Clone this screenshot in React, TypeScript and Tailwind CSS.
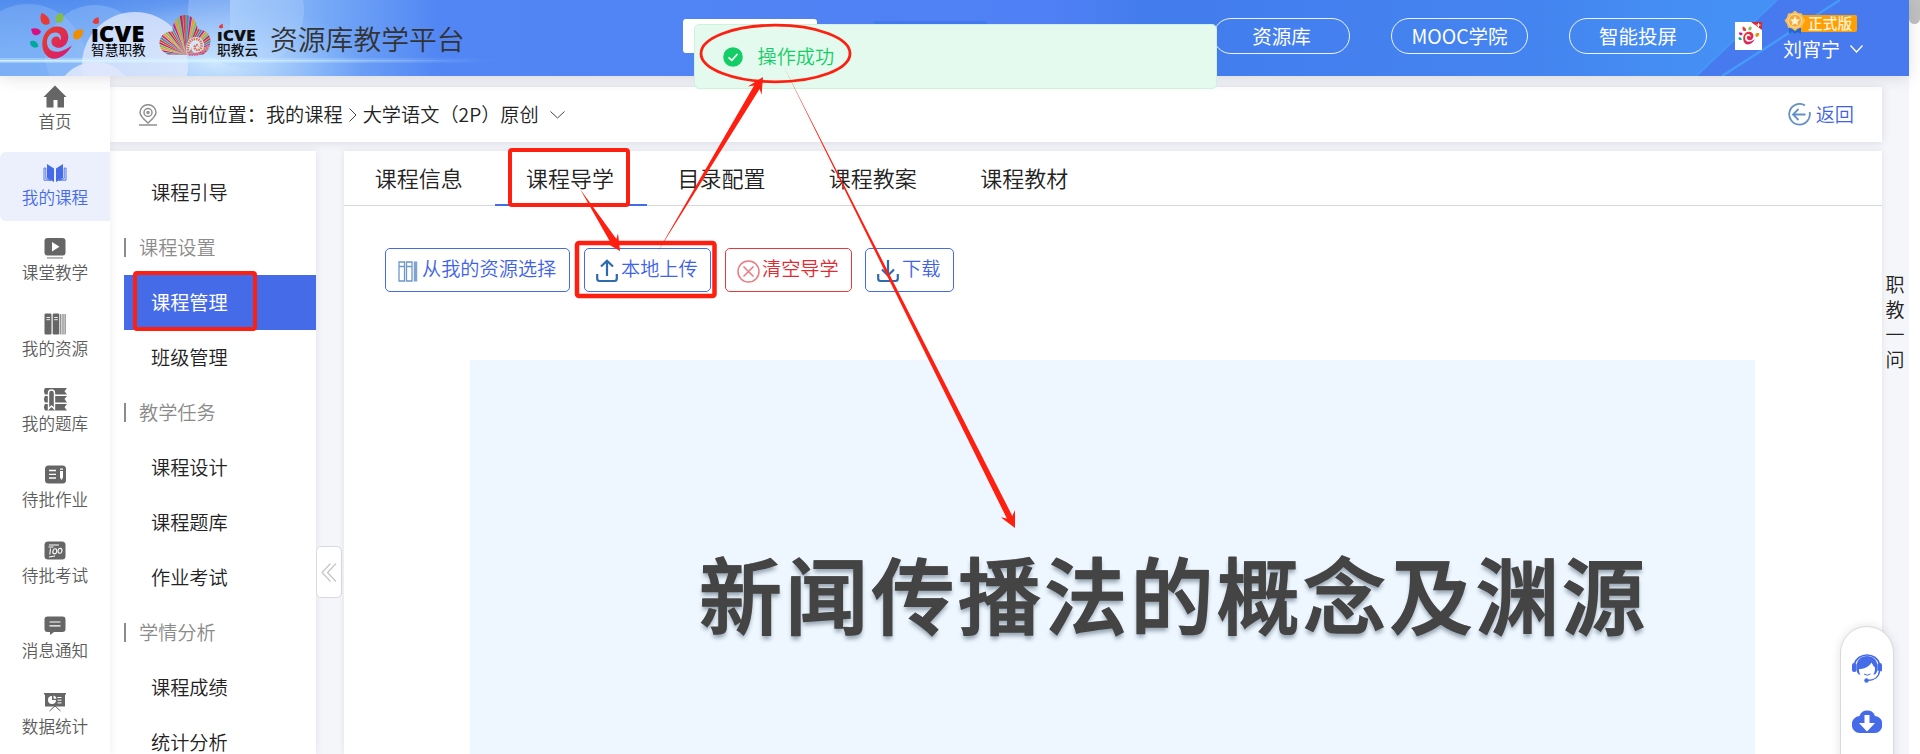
import React from "react";

const railItems = [
  "首页", "我的课程", "课堂教学", "我的资源", "我的题库", "待批作业", "待批考试", "消息通知", "数据统计",
];

type Entry = { label: string; kind?: "group" | "active" };
const menu: Entry[] = [
  { label: "课程引导" },
  { label: "课程设置", kind: "group" },
  { label: "课程管理", kind: "active" },
  { label: "班级管理" },
  { label: "教学任务", kind: "group" },
  { label: "课程设计" },
  { label: "课程题库" },
  { label: "作业考试" },
  { label: "学情分析", kind: "group" },
  { label: "课程成绩" },
  { label: "统计分析" },
];

const tabs = ["课程信息", "课程导学", "目录配置", "课程教案", "课程教材"];

function RailIcon({ index }: { index: number }) {
  const c = index === 1 ? "#466be8" : "#666666";
  return (
    <svg width="24" height="24" viewBox="0 0 24 24" fill={c} className="block">
      {index === 0 && <path d="M12 0.5 L23.5 12 H21 V22.5 H14.5 V15 H10.5 V22.5 H3.5 V12 H0.5 Z" />}
      {index === 1 && (
        <g>
          <path d="M4 3 L11 7.5 V21 L4 17 Z M20 3 L13 7.5 V21 L20 17 Z" />
          <path d="M2.6 7 H1 V19.2 H8 M21.400 7 H23 V19.2 H16 M2.800 7 V17.500 L8 19.500 M21.200 7 V17.500 L16 19.500" fill="none" stroke={c} strokeWidth="0.900" />
        </g>
      )}
      {index === 2 && (
        <g>
          <rect x="1.500" y="2" width="21" height="17.500" rx="3" />
          <path d="M9 6 L16.500 10.800 L9 15.500 Z" fill="#fff" />
          <rect x="4" y="21.200" width="16" height="1.500" opacity="0.600" />
        </g>
      )}
      {index === 3 && (
        <g>
          <rect x="1.500" y="1.500" width="7" height="21" rx="1.200" />
          <rect x="9.700" y="1.500" width="6.600" height="21" rx="1.200" />
          <path d="M17.300 2 h1 v20.500 h-1z M19.500 2 h1 v20.500 h-1z M21.600 2 h1 v20.500 h-1z" />
          <path d="M3.500 5.500 h3.500 M3.500 7.700 h3.500 M11.300 5.500 h3.500 M11.300 7.700 h3.500" stroke="#fff" strokeWidth="0.900" />
        </g>
      )}
      {index === 4 && (
        <g>
          <path d="M2 1 H24 L21.500 4.200 L24 7.500 H2 Q0 4.200 2 1 Z M2 9 H24 L21.500 12 L24 15.500 H2 Q0 12 2 9 Z M2 17 H24 L21.500 20.200 L24 23.500 H2 Q0 20.200 2 17 Z" />
          <path d="M5.500 22 V6 Q5.500 3 8.500 3 Q11.500 3 11.500 6 V22 L8.500 19 Z" stroke="#fff" strokeWidth="1.400" />
        </g>
      )}
      {index === 5 && (
        <g>
          <rect x="2" y="2.500" width="21" height="18" rx="3.500" />
          <path d="M6 7.500 h7 M6 11.300 h7 M6 15 h7" stroke="#fff" strokeWidth="1.300" />
          <path d="M17 5.500 h3 v1.300 h-3z M17 8 h3 v6.500 l-1.500 2.500 l-1.500 -2.500z" fill="#fff" />
        </g>
      )}
      {index === 6 && (
        <g>
          <rect x="1.500" y="2.500" width="21" height="18" rx="3.500" />
          <g fill="none" stroke="#fff" strokeWidth="1.100">
            <path d="M6 6 h10 M5.500 8 h5 M7.500 9.500 L6.800 15.500 M6 18 L12 17" />
            <ellipse cx="11.800" cy="12.300" rx="1.900" ry="2.600" transform="rotate(15 11.800 12.300)" />
            <ellipse cx="17" cy="11.800" rx="1.900" ry="2.500" transform="rotate(15 17 11.800)" />
          </g>
        </g>
      )}
      {index === 7 && (
        <g>
          <path d="M4.500 2.500 h15 q3 0 3 3 v9.500 q0 3 -3 3 h-8.500 l-4 3 v-3 h-2.500 q-3 0 -3 -3 v-9.500 q0 -3 3 -3z" />
          <path d="M6.500 8 h11 M6.500 11.800 h11" stroke="#fff" strokeWidth="1.200" />
        </g>
      )}
      {index === 8 && (
        <g>
          <path d="M1 3 h22 v1.500 h-1 v12 h-20 v-12 h-1z" />
          <path d="M12 16 L6.500 21 M12 16 L17.500 21" stroke={c} strokeWidth="1" />
          <path d="M9 6 v4 h4 a4 4 0 1 1 -4 -4z" fill="#fff" />
          <path d="M10.500 5.500 a4 4 0 0 1 3 3.200 h-3z" fill="#fff" />
          <path d="M14.500 7.500 h4 M14.500 10.200 h4 M14.500 12.900 h4" stroke="#fff" strokeWidth="1" />
        </g>
      )}
    </svg>
  );
}

function SwirlMark({ className }: { className: string }) {
  return (
    <svg viewBox="0 0 56 48" className={className}>
      <defs>
        <linearGradient id="swirl" x1="0" y1="0" x2="1" y2="1">
          <stop offset="0" stopColor="#e8431f" />
          <stop offset="1" stopColor="#d5157f" />
        </linearGradient>
      </defs>
      <path d="M12.500 1 C18 3 21.500 7 20.500 11.500 C17.500 14 13.500 13 12 9 C11 6 11.500 3.500 12.500 1Z" fill="#e73935" />
      <path d="M33 1 C35.500 4 35 8.500 32 10.500 C28 12 25.500 9 26.500 5.500 C27.500 2.500 30 1 33 1Z" fill="#86bc48" />
      <path d="M2 17 C5 15.500 10 16 12 19.500 C11 23.500 5.500 24.500 3.500 21.500 Z" fill="#dc0f82" />
      <path d="M1 29.500 C4.500 27.500 8.500 29 9.500 34.500 C6 37 1 35.500 1 29.500Z" fill="#00a99d" />
      <path d="M54 17.500 C54.500 22 52 27.500 47.500 27.500 C44 27.500 43 22.500 45.500 19.500 C47.500 17.500 50.500 17.500 54 17.500Z" fill="#ef8e00" />
      <path d="M26.500 14.500 C35.500 13.500 40.500 20 39 27.500 C37.500 35 29.500 38 24.500 34 C20.500 30.500 22.500 24.500 27.500 24.500 C30 24.500 31.500 26.500 30.500 28.500 C33 27 32.500 21.500 27.500 20.500 C21.500 19.500 17.500 25 18 31 C18.500 40 28 44 43 33.500 C36.500 45 26.500 49 20 45.500 C9.500 39.500 11 17 26.500 14.500Z" fill="url(#swirl)" />
    </svg>
  );
}

const rayColors = ["#e6352c", "#35998f", "#d61a7f", "#f09a1a", "#86bc48", "#c8204a"];
function ShellMark() {
  const count = 38;
  const rays = Array.from({ length: count }, (_, i) => {
    const a = Math.PI * (1 - i / (count - 1));
    const d = 0.031;
    return {
      points: `27,40 ${27 + Math.cos(a + d) * 60},${40 - Math.sin(a + d) * 60} ${27 + Math.cos(a - d) * 60},${40 - Math.sin(a - d) * 60}`,
      color: rayColors[i % 6],
    };
  });
  return (
    <svg viewBox="0 0 52 41" className="block h-[41px] w-[52px]">
      <defs>
        <clipPath id="lobes">
          <circle cx="12" cy="28" r="11.500" />
          <ellipse cx="26" cy="15" rx="12.500" ry="15" />
          <circle cx="40" cy="26" r="11.500" />
          <path d="M3 34 L12 17 L40 14 L50 34 L44 40 H9Z" />
        </clipPath>
      </defs>
      <g clipPath="url(#lobes)">
        {rays.map((r, i) => (
          <polygon key={i} points={r.points} fill={r.color} />
        ))}
      </g>
      <path d="M28 40 C25 28 31 21 38 22 C46 23 47 33 42 36 C37 39.500 31 37 33 32 Z" fill="#d8e6fd" />
      <path d="M29.500 38 C27.500 30 31 23.500 37.500 24 C43 24.500 44 32 40.500 34.500 C38 36 34.500 34 36 31 C37 29.500 39 30 39 31.500" fill="none" stroke="#e2703f" strokeWidth="2.600" strokeDasharray="1.500 0.800" />
      <path d="M30 39.500 C38 40.500 47 38 50 29" fill="none" stroke="#d9679a" strokeWidth="3" strokeDasharray="1.600 0.800" />
    </svg>
  );
}

function arrow(x1: number, y1: number, x2: number, y2: number, w: number, head: number, barb: number) {
  const len = Math.hypot(x2 - x1, y2 - y1);
  const ux = (x2 - x1) / len;
  const uy = (y2 - y1) / len;
  const at = (back: number, side: number) =>
    `${(x2 - ux * back - uy * side).toFixed(1)},${(y2 - uy * back + ux * side).toFixed(1)}`;
  return [
    `${x1},${y1}`, at(head * 0.75, w), at(head, barb), at(0, 0), at(head, -barb), at(head * 0.75, -w),
  ].join(" ");
}

function HeaderBackdrop() {
  return (
    <svg className="absolute inset-0" width="1909" height="76" viewBox="0 0 1909 76">
      <defs>
        <linearGradient id="base" x1="0" x2="1">
          <stop offset="0" stopColor="#6aa6f5" />
          <stop offset="0.040" stopColor="#6ea8f6" />
          <stop offset="0.120" stopColor="#9dc5fa" />
          <stop offset="0.170" stopColor="#75a9f7" />
          <stop offset="0.230" stopColor="#5186f4" />
          <stop offset="0.550" stopColor="#5080f5" />
          <stop offset="0.600" stopColor="#437ced" />
          <stop offset="0.800" stopColor="#4484f0" />
          <stop offset="0.900" stopColor="#4590f4" />
          <stop offset="1" stopColor="#4590f4" />
        </linearGradient>
        <radialGradient id="glow">
          <stop offset="0" stopColor="#d3ecff" stopOpacity="0.900" />
          <stop offset="1" stopColor="#a5ccfb" stopOpacity="0" />
        </radialGradient>
        <linearGradient id="beam" x1="0" x2="1">
          <stop offset="0" stopColor="#d8f6ff" stopOpacity="0.900" />
          <stop offset="0.500" stopColor="#d8f6ff" stopOpacity="0.700" />
          <stop offset="1" stopColor="#d8f6ff" stopOpacity="0" />
        </linearGradient>
        <linearGradient id="dim" x1="0" y1="0" x2="0" y2="1">
          <stop offset="0" stopColor="#3d78e8" stopOpacity="0.550" />
          <stop offset="1" stopColor="#3d78e8" stopOpacity="0" />
        </linearGradient>
      </defs>
      <rect width="1909" height="76" fill="url(#base)" />
      <rect width="230" height="50" fill="url(#dim)" />
      <circle cx="28" cy="62" r="58" fill="#9bc2f8" opacity="0.350" />
      <ellipse cx="215" cy="62" rx="150" ry="60" fill="url(#glow)" />
      <circle cx="246" cy="10" r="58" fill="#b5d3fc" opacity="0.350" />
      <circle cx="95" cy="55" r="50" fill="#9cc4fa" opacity="0.400" />
      <circle cx="135" cy="65" r="53" fill="#dfe7fb" opacity="0.800" />
      <circle cx="95" cy="102" r="40" fill="#dfe7fc" opacity="0.900" />
      <rect y="58" width="500" height="5" fill="url(#beam)" opacity="0.400" />
      <rect y="60" width="480" height="1.500" fill="url(#beam)" />
      <path d="M1777 0 H1909 V76 H1696 Z" fill="#4779ef" />
      <path d="M1840 0 L1722 76" stroke="#459bf8" strokeWidth="2.500" />
      <path d="M1777 0 L1696 76" stroke="#4596f6" strokeWidth="2" />
      <rect x="874" y="21" width="113" height="32" fill="#4179ee" />
    </svg>
  );
}

function ToolButton({ label, className, children }: { label: string; className: string; children: React.ReactNode }) {
  return (
    <button className={`flex h-[44px] items-center rounded-[5px] border text-[19.200px] ${className}`}>
      <span className="mt-[2px] flex w-[24px] justify-center">{children}</span>
      <span className="-mt-[4px] ml-[2px] whitespace-nowrap">{label}</span>
    </button>
  );
}

function TrayIcon({ down }: { down?: boolean }) {
  return (
    <svg width="22" height="24" viewBox="0 0 22 24" fill="none" stroke="#2d6bb0" strokeWidth="2.200">
      <path d="M1.200 15 V19.500 Q1.200 22 3.500 22 H18.500 Q20.800 22 20.800 19.500 V15" />
      {down ? <path d="M11 1 V16 M5 10.500 L11 16.500 L17 10.500" /> : <path d="M11 17 V2 M5 7.500 L11 1.700 L17 7.500" />}
    </svg>
  );
}

export default function App() {
  return (
    <div className="relative flex h-[754px] w-[1920px] overflow-hidden bg-white font-['Noto_Sans_CJK_SC',sans-serif] font-[350] text-[#222]">
      <div className="flex w-[1909px] flex-col bg-[#f5f6fa]">
        <header className="relative z-10 h-[76px] shrink-0 shadow-[0_2px_14px_rgba(60,60,90,0.16)]">
          <HeaderBackdrop />
          <div className="relative flex h-full w-full">
            <SwirlMark className="ml-[29px] mt-[12px] h-[48px] w-[56px] shrink-0" />
            <div className="ml-[6px] mt-[16px] w-[56px] shrink-0 text-black">
              <div className="relative h-[26px] font-['Open_Sans',sans-serif] text-[22px] font-extrabold leading-[34px]">
                <span className="inline-block origin-left scale-x-[1.100]">ıCVE</span>
                <svg className="absolute left-[1px] top-0" width="8" height="9" viewBox="0 0 8 9"><path d="M6.500 1 L7 7 Q3 9.500 0.500 6 Q2 2 6.500 1Z" fill="#e73935" /></svg>
              </div>
              <div className="whitespace-nowrap text-[13.700px] font-normal leading-[14px]">智慧职教</div>
            </div>
            <div className="ml-[12px] mt-[15px] shrink-0"><ShellMark /></div>
            <div className="ml-[6px] mt-[22px] w-[44px] shrink-0 text-[#111]">
              <div className="relative h-[20px] font-['Open_Sans',sans-serif] text-[16.500px] font-extrabold leading-[25px]">
                <span className="inline-block origin-left scale-x-[1.050]">ıCVE</span>
                <svg className="absolute left-[1px] top-[1px]" width="6" height="6" viewBox="0 0 8 9"><path d="M6.500 1 L7 7 Q3 9.500 0.500 6 Q2 2 6.500 1Z" fill="#e73935" /></svg>
              </div>
              <div className="whitespace-nowrap text-[13.700px] font-medium leading-[14px]">职教云</div>
            </div>
            <div className="ml-[9px] w-[196px] shrink-0 whitespace-nowrap text-[27.800px] leading-[77px] text-[#333]">资源库教学平台</div>
            <div className="ml-[217px] mt-[19px] h-[34px] w-[134px] shrink-0 rounded-[3px] bg-white" />
            <nav className="ml-[396px] mt-[18px] flex h-[36px] shrink-0 gap-[41px] text-[19.500px] text-white">
              <a className="flex w-[137px] items-center justify-center rounded-full border border-white/90 font-normal">资源库</a>
              <a className="flex w-[137px] items-center justify-center rounded-full border border-white/90 font-normal">MOOC学院</a>
              <a className="flex w-[138px] items-center justify-center rounded-full border border-white/90 font-normal">智能投屏</a>
            </nav>
            <div className="relative ml-[28px] mt-[22px] h-[28px] w-[27px] shrink-0 bg-white">
              <SwirlMark className="ml-[3px] mt-[4px] h-[19px] w-[22px]" />
              <svg className="absolute right-0 top-0" width="11" height="8" viewBox="0 0 11 8"><path d="M0 0 H11 V8Z" fill="#d9262f" /><path d="M7.500 1 V5 M5.500 3 H9.500" stroke="#fff" /></svg>
            </div>
            <div className="ml-[21px] mt-[10px] w-[90px] shrink-0">
              <div className="relative flex h-[25px] pl-[16px] pt-[5px]">
                <svg className="absolute left-[1px] top-0" width="22" height="25" viewBox="0 0 22 25">
                  <path d="M5 17 V24 L8.500 22 L11 24 L13.500 22 L17 24 V17Z" fill="#2668cf" />
                  <path d="M11 0.500 L14 3 L18 3.500 L19 7.500 L21.500 10.500 L19 14 L18 17.500 L14 18.500 L11 21 L8 18.500 L4 17.500 L3 14 L0.500 10.500 L3 7.500 L4 3.500 L8 3Z" fill="#f8c05c" />
                  <circle cx="11" cy="10.800" r="6.500" fill="#f6a83a" stroke="#fde2a5" strokeWidth="1" />
                  <path d="M11 6 L12.500 9.300 L16 9.600 L13.400 12 L14.200 15.500 L11 13.600 L7.800 15.500 L8.600 12 L6 9.600 L9.500 9.300Z" fill="#fff2cc" />
                </svg>
                <span className="h-[17px] w-[58px] rounded-[2px] bg-[#ff9f05] pl-[9px] text-[14.700px] font-medium leading-[16px] text-[#fff3d6]">正式版</span>
              </div>
              <div className="flex items-center text-[19px] font-normal leading-[28px] text-white">
                <span className="w-[58px] whitespace-nowrap">刘宵宁</span>
                <svg className="ml-[9px]" width="13" height="8" viewBox="0 0 13 8" fill="none" stroke="#fff" strokeWidth="1.400"><path d="M0.500 0.500 L6.500 7 L12.500 0.500" /></svg>
              </div>
            </div>
          </div>
        </header>

        <div className="flex min-h-0 flex-1">
          <aside className="relative z-[5] w-[110px] shrink-0 bg-white shadow-[0_0_8px_rgba(60,60,90,0.1)]">
            {railItems.map((label, i) => (
              <div key={label} className={`mb-[6.600px] flex h-[69px] flex-col items-center ${i === 1 ? "rounded-l-[6px] bg-[#ecf0fc] text-[#466be8]" : "text-[#5c5c5c]"} pt-[9px]`}>
                <RailIcon index={i} />
                <span className="-mt-px text-[16.600px] leading-[26px]">{label}</span>
              </div>
            ))}
          </aside>

          <div className="flex min-w-0 flex-1 flex-col">
            <div className="mt-[11px] flex h-[55px] w-[1772px] shrink-0 items-center bg-white pl-[28px] text-[19.200px] shadow-[0_1px_8px_rgba(60,60,90,0.14)]">
              <svg width="20" height="22" viewBox="0 0 20 22" fill="none" stroke="#8e8e8e" strokeWidth="1.500">
                <path d="M10 19 C6 15.500 2 12 2 8.500 A8 7.800 0 0 1 18 8.500 C18 12 14 15.500 10 19Z" />
                <circle cx="10" cy="8.500" r="4" />
                <circle cx="10" cy="8.500" r="1" />
                <path d="M1 21 H19" />
              </svg>
              <span className="ml-[12px]">当前位置：我的课程</span>
              <svg className="ml-[6px] mr-[6px]" width="8" height="14" viewBox="0 0 8 14" fill="none" stroke="#444"><path d="M0.500 0.500 L7 7 L0.500 13.500" /></svg>
              <span>大学语文（2P）原创</span>
              <svg className="ml-[11px]" width="15" height="8" viewBox="0 0 15 8" fill="none" stroke="#444"><path d="M0.500 0.500 L7.500 7 L14.500 0.500" /></svg>
              <div className="ml-auto mr-[28px] flex items-center text-[#3f63e6]">
                <svg width="23" height="23" viewBox="0 0 23 23" fill="none" stroke="#6590c6" strokeWidth="1.800">
                  <path d="M17 2.500 A10.300 10.300 0 1 0 21.600 9" />
                  <path d="M5 11.500 H17.500 M10.500 6 L5 11.500 L10.500 17" />
                </svg>
                <span className="ml-[5px]">返回</span>
              </div>
            </div>

            <div className="mt-[9px] flex min-h-0 flex-1">
              <div className="w-[206px] shrink-0 bg-white pl-[14px] pt-[14px] text-[19.200px] shadow-[0_0_8px_rgba(60,60,90,0.1)]">
                {menu.map((m) =>
                  m.kind === "group" ? (
                    <div key={m.label} className="flex h-[55px] items-center text-[#8b8b8b]">
                      <span className="h-[19px] w-[2px] bg-[#8b8b8b]" />
                      <span className="ml-[13px]">{m.label}</span>
                    </div>
                  ) : (
                    <div key={m.label} className={`flex h-[55px] items-center pl-[27px] ${m.kind === "active" ? "bg-[#466be8] font-normal text-white" : ""}`}>
                      {m.label}
                    </div>
                  ),
                )}
              </div>
              <div className="flex w-[28px] shrink-0 flex-col">
                <button className="mt-[395px] flex h-[52px] w-[26px] items-center justify-center rounded-[5px] border border-[#d9dadf] bg-white">
                  <svg width="16" height="19" viewBox="0 0 16 19" fill="none" stroke="#c4c4c4" strokeWidth="1.200"><path d="M9.500 0.500 L1 9.500 L9.500 18.500 M15 0.500 L6.500 9.500 L15 18.500" /></svg>
                </button>
              </div>

              <main className="flex w-[1538px] shrink-0 flex-col bg-white shadow-[0_0_6px_rgba(60,60,90,0.1)]">
                <div className="flex h-[55px] shrink-0 border-b border-[#d6d7da] text-[22px]">
                  {tabs.map((t, i) => (
                    <div key={t} className={`flex h-[55px] w-[151.400px] items-center justify-center pb-[3px] pr-[2px] ${i === 1 ? "border-b-2 border-[#466be8] pt-[2px]" : ""}`}>{t}</div>
                  ))}
                </div>
                <div className="mt-[42px] flex shrink-0 pl-[41px]">
                  <ToolButton label="从我的资源选择" className="w-[185px] border-[#466be8] pl-[10px] text-[#3f63e6]">
                    <svg width="20" height="21" viewBox="0 0 20 21" fill="none" stroke="#6f97c9" strokeWidth="1.300">
                      <path d="M1 1 H6.500 V20 H1Z M8.500 1 H14 V20 H8.500Z M1 5.500 H6.500 M8.500 5.500 H14" />
                      <path d="M17.500 0.500 V20.500" stroke="#7fa3d0" strokeWidth="3.500" />
                    </svg>
                  </ToolButton>
                  <ToolButton label="本地上传" className="ml-[14px] w-[127px] border-[#466be8] pl-[10px] text-[#3f63e6]"><TrayIcon /></ToolButton>
                  <ToolButton label="清空导学" className="ml-[14px] w-[127px] border-[#e5383f] pl-[10px] text-[#e02b33]">
                    <svg width="23" height="23" viewBox="0 0 23 23" fill="none" stroke="#ee7a80" strokeWidth="1.500"><circle cx="11.500" cy="11.500" r="10.500" /><path d="M6.500 6.500 L16.500 16.500 M16.500 6.500 L6.500 16.500" /></svg>
                  </ToolButton>
                  <ToolButton label="下载" className="ml-[13px] w-[89px] border-[#466be8] pl-[10px] text-[#3f63e6]"><TrayIcon down /></ToolButton>
                </div>
                <div className="ml-[126px] mt-[68px] flex min-h-0 w-[1285px] flex-1 bg-[#eef7ff] pl-[229px]">
                  <h1 className="mt-[172px] h-[120px] whitespace-nowrap text-[83px] font-medium leading-[120px] tracking-[3.300px] text-[#444] [-webkit-text-stroke:1.600px_#444] [text-shadow:0_-1px_0_#8a8a8a,0_4px_4px_rgba(40,60,80,0.45)]">新闻传播法的概念及渊源</h1>
                </div>
              </main>
              <div className="w-[27px] shrink-0 pt-[120px] pl-[3.500px] pr-[3.500px] text-left text-[19px] leading-[25px]">职教一问</div>
            </div>
          </div>
        </div>
      </div>
      <div className="w-[11px]"><div className="h-[24px] rounded-b-[6px] bg-[#c1c1c1]" /></div>

      <div className="absolute left-[1840px] top-[626px] z-20 flex h-[150px] w-[54px] flex-col items-center rounded-t-full border border-[#d9d9dc] bg-white pt-[25px] shadow-[0_0_8px_rgba(60,60,90,0.15)]">
        <svg width="30" height="31" viewBox="0 0 30 31">
          <path d="M2.500 12 A12.800 11.500 0 0 1 27.500 12" fill="none" stroke="#466be8" strokeWidth="1.700" />
          <rect x="0" y="11" width="4.500" height="9" rx="2" fill="#466be8" />
          <rect x="25.500" y="11" width="4.500" height="9" rx="2" fill="#466be8" />
          <path d="M4.500 18 V13 C5.500 7 10 4 15 4 C20 4 24.500 7 25.500 13 V18 C25 20 24 21.500 23 22.500 H7 C5.500 21.500 5 20 4.500 18Z" fill="#466be8" />
          <path d="M7 17 C13 17 17 14.500 19.500 10.500 C20.500 12 21 14 23 15.500 C23.500 21 20 26.500 15 27.500 C10 26.500 6.500 21 7 17Z" fill="#fff" />
          <path d="M12 22 Q15 24.500 18.500 22" fill="none" stroke="#466be8" strokeWidth="1" />
          <path d="M27.500 19 C27 25 22 28.500 15 28.500" fill="none" stroke="#fff" strokeWidth="3.500" />
          <path d="M27.500 19 C27 25 22 28.500 15 28.500" fill="none" stroke="#466be8" strokeWidth="1.500" />
          <circle cx="14.500" cy="28.500" r="2.200" fill="#466be8" />
        </svg>
        <svg className="mt-[25px]" width="30" height="25" viewBox="0 0 30 25">
          <path d="M8 25 A8 8.500 0 0 1 7.500 8 A8.200 8 0 0 1 23 8 A8 8.500 0 0 1 22 25Z" fill="#466be8" />
          <path d="M12.500 7 h5 v8 h5.500 l-8 8.500 l-8 -8.500 h5.500z" fill="#fff" />
        </svg>
      </div>

      <div className="absolute left-[694px] top-[24px] z-30 flex h-[65px] w-[523px] items-center rounded-[5px] border border-[#cdf3dd] bg-[#e5faee] pl-[28px] text-[19.200px] text-[#13ce66]">
        <svg width="20" height="20" viewBox="0 0 20 20"><circle cx="10" cy="10" r="9.800" fill="#13ce66" /><path d="M5.500 10.300 L8.800 13.300 L14.500 7" fill="none" stroke="#fff" strokeWidth="1.700" /></svg>
        <span className="ml-[14.500px] -mt-px">操作成功</span>
      </div>

      <svg className="pointer-events-none absolute inset-0 z-40" width="1920" height="754" viewBox="0 0 1920 754" fill="none">
        <g stroke="#ff1f10">
          <ellipse cx="775.500" cy="53.500" rx="74.500" ry="28.300" strokeWidth="2.800" />
          <rect x="135" y="273" width="120" height="56" rx="2" strokeWidth="4" />
          <rect x="510" y="150" width="118" height="55" rx="2" strokeWidth="4" />
          <rect x="577" y="243" width="137.500" height="53" rx="2" strokeWidth="4.500" />
        </g>
        <g fill="#ff1f10">
          <polygon points={arrow(580, 189, 620, 251, 3.4, 16, 8)} />
          <polygon points={arrow(657, 253, 763, 77, 3.2, 16, 8)} />
          <polygon points={arrow(784, 67, 1015, 528, 3, 16, 8)} />
        </g>
      </svg>
    </div>
  );
}
